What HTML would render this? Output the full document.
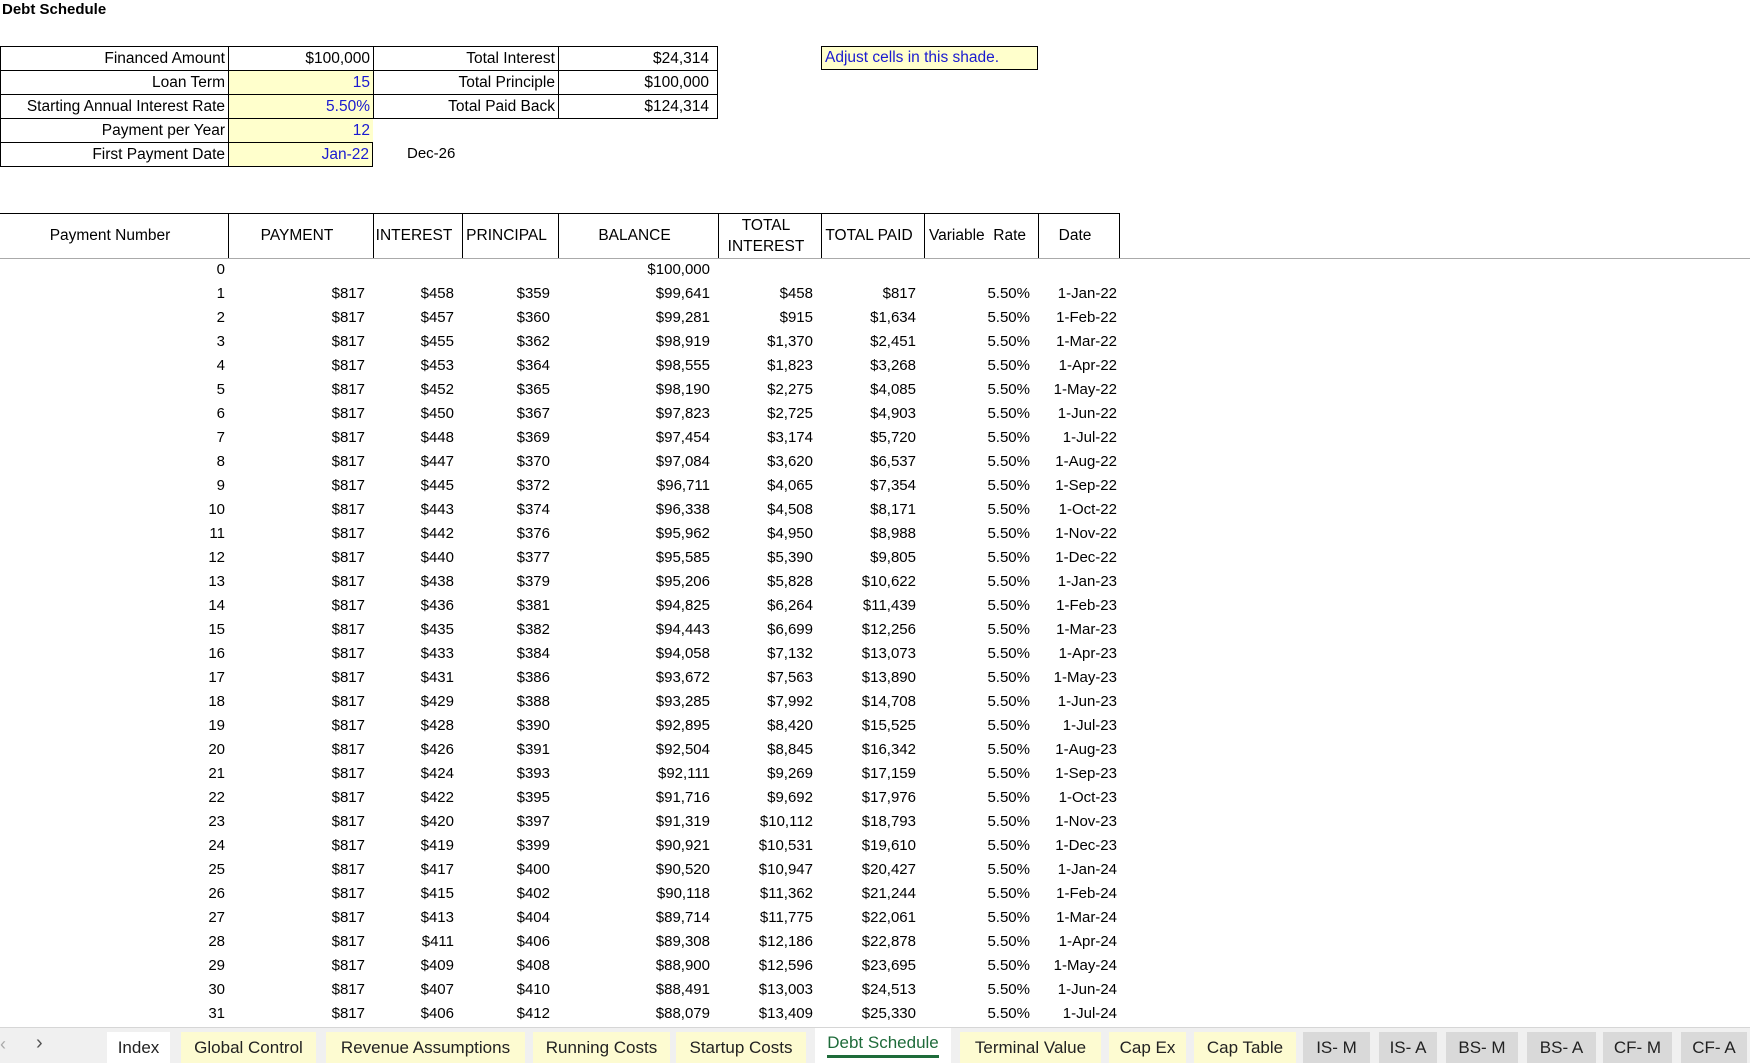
<!DOCTYPE html>
<html><head><meta charset="utf-8"><style>
body{margin:0;width:1750px;height:1062px;overflow:hidden;background:#fff;font-family:"Liberation Sans",Arial,sans-serif;color:#000;position:relative}
.a{position:absolute}
.title{left:2px;top:1px;font-weight:bold;font-size:15px}
.c{position:absolute;height:24px;line-height:24px;font-size:15.5px;text-align:right;padding-right:3px;box-sizing:border-box;border:1px solid #000;border-right:none;border-bottom:none}
.y{background:#ffffcc;color:#1a1ad0}
.r{position:absolute;left:0;height:24px;line-height:24px;font-size:15px;display:flex}
.r span{display:block;text-align:right;box-sizing:border-box;padding-right:8px;white-space:nowrap}
.hd span{display:flex;align-items:center;justify-content:center;text-align:center;border-left:1px solid #000;box-sizing:border-box;font-size:15.5px;line-height:21px}
.tabs{position:absolute;left:0;top:1027px;width:1750px;height:35px;background:#f0f0f0;border-top:1px solid #d6d6d6}
.t{position:absolute;top:4px;height:31px;line-height:31px;font-size:17px;text-align:center;background:#fdfbd1;color:#222}
.g{background:#d9d9d9}
</style></head><body>
<div class="a title">Debt Schedule</div>

<!-- top table -->
<div class="c" style="left:0;top:46px;width:228px">Financed Amount</div>
<div class="c" style="left:228px;top:46px;width:145px">$100,000</div>
<div class="c" style="left:0;top:70px;width:228px">Loan Term</div>
<div class="c y" style="left:228px;top:70px;width:145px">15</div>
<div class="c" style="left:0;top:94px;width:228px">Starting Annual Interest Rate</div>
<div class="c y" style="left:228px;top:94px;width:145px">5.50%</div>
<div class="c" style="left:0;top:118px;width:228px">Payment per Year</div>
<div class="c y" style="left:228px;top:118px;width:145px">12</div>
<div class="c" style="left:0;top:142px;width:228px;border-bottom:1px solid #000;height:25px">First Payment Date</div>
<div class="c y" style="left:228px;top:142px;width:145px;border-bottom:1px solid #000;height:25px;border-right:1px solid #000">Jan-22</div>
<div class="a" style="left:407px;top:142px;line-height:24px;font-size:15px">Dec-26</div>

<div class="c" style="left:373px;top:46px;width:185px">Total Interest</div>
<div class="c" style="left:558px;top:46px;width:160px;border-right:1px solid #000;padding-right:8px">$24,314</div>
<div class="c" style="left:373px;top:70px;width:185px">Total Principle</div>
<div class="c" style="left:558px;top:70px;width:160px;border-right:1px solid #000;padding-right:8px">$100,000</div>
<div class="c" style="left:373px;top:94px;width:185px;border-bottom:1px solid #000;height:25px">Total Paid Back</div>
<div class="c" style="left:558px;top:94px;width:160px;border:1px solid #000;height:25px;padding-right:8px">$124,314</div>

<div class="a" style="left:821px;top:46px;width:217px;height:24px;box-sizing:border-box;border:1px solid #000;background:#ffffcc;color:#1a1ad0;font-size:15.5px;line-height:22px;padding-left:3px">Adjust cells in this shade.</div>

<!-- header -->
<div class="a" style="left:0;top:213px;width:1120px;border-top:1px solid #000"></div>
<div class="a" style="left:0;top:258px;width:1750px;border-top:1px solid #aaa"></div>
<div class="r hd" style="top:213px;height:45px">
<span style="width:228px;border-left:none">Payment Number</span>
<span style="width:145px">PAYMENT</span>
<span style="width:89px">INTEREST</span>
<span style="width:96px">PRINCIPAL</span>
<span style="width:160px">BALANCE</span>
<span style="width:103px">TOTAL<br>INTEREST</span>
<span style="width:103px">TOTAL PAID</span>
<span style="width:114px">Variable&nbsp; Rate</span>
<span style="width:82px;border-right:1px solid #000">Date</span>
</div>

<div class="r" style="top:258px"><span style="width:228px;padding-right:3px">0</span><span style="width:145px"></span><span style="width:89px"></span><span style="width:96px"></span><span style="width:160px">$100,000</span></div>
<div class="r" style="top:282px"><span style="width:228px;padding-right:3px">1</span><span style="width:145px">$817</span><span style="width:89px">$458</span><span style="width:96px">$359</span><span style="width:160px">$99,641</span><span style="width:103px">$458</span><span style="width:103px">$817</span><span style="width:114px">5.50%</span><span style="width:82px;padding-right:3px">1-Jan-22</span></div>
<div class="r" style="top:306px"><span style="width:228px;padding-right:3px">2</span><span style="width:145px">$817</span><span style="width:89px">$457</span><span style="width:96px">$360</span><span style="width:160px">$99,281</span><span style="width:103px">$915</span><span style="width:103px">$1,634</span><span style="width:114px">5.50%</span><span style="width:82px;padding-right:3px">1-Feb-22</span></div>
<div class="r" style="top:330px"><span style="width:228px;padding-right:3px">3</span><span style="width:145px">$817</span><span style="width:89px">$455</span><span style="width:96px">$362</span><span style="width:160px">$98,919</span><span style="width:103px">$1,370</span><span style="width:103px">$2,451</span><span style="width:114px">5.50%</span><span style="width:82px;padding-right:3px">1-Mar-22</span></div>
<div class="r" style="top:354px"><span style="width:228px;padding-right:3px">4</span><span style="width:145px">$817</span><span style="width:89px">$453</span><span style="width:96px">$364</span><span style="width:160px">$98,555</span><span style="width:103px">$1,823</span><span style="width:103px">$3,268</span><span style="width:114px">5.50%</span><span style="width:82px;padding-right:3px">1-Apr-22</span></div>
<div class="r" style="top:378px"><span style="width:228px;padding-right:3px">5</span><span style="width:145px">$817</span><span style="width:89px">$452</span><span style="width:96px">$365</span><span style="width:160px">$98,190</span><span style="width:103px">$2,275</span><span style="width:103px">$4,085</span><span style="width:114px">5.50%</span><span style="width:82px;padding-right:3px">1-May-22</span></div>
<div class="r" style="top:402px"><span style="width:228px;padding-right:3px">6</span><span style="width:145px">$817</span><span style="width:89px">$450</span><span style="width:96px">$367</span><span style="width:160px">$97,823</span><span style="width:103px">$2,725</span><span style="width:103px">$4,903</span><span style="width:114px">5.50%</span><span style="width:82px;padding-right:3px">1-Jun-22</span></div>
<div class="r" style="top:426px"><span style="width:228px;padding-right:3px">7</span><span style="width:145px">$817</span><span style="width:89px">$448</span><span style="width:96px">$369</span><span style="width:160px">$97,454</span><span style="width:103px">$3,174</span><span style="width:103px">$5,720</span><span style="width:114px">5.50%</span><span style="width:82px;padding-right:3px">1-Jul-22</span></div>
<div class="r" style="top:450px"><span style="width:228px;padding-right:3px">8</span><span style="width:145px">$817</span><span style="width:89px">$447</span><span style="width:96px">$370</span><span style="width:160px">$97,084</span><span style="width:103px">$3,620</span><span style="width:103px">$6,537</span><span style="width:114px">5.50%</span><span style="width:82px;padding-right:3px">1-Aug-22</span></div>
<div class="r" style="top:474px"><span style="width:228px;padding-right:3px">9</span><span style="width:145px">$817</span><span style="width:89px">$445</span><span style="width:96px">$372</span><span style="width:160px">$96,711</span><span style="width:103px">$4,065</span><span style="width:103px">$7,354</span><span style="width:114px">5.50%</span><span style="width:82px;padding-right:3px">1-Sep-22</span></div>
<div class="r" style="top:498px"><span style="width:228px;padding-right:3px">10</span><span style="width:145px">$817</span><span style="width:89px">$443</span><span style="width:96px">$374</span><span style="width:160px">$96,338</span><span style="width:103px">$4,508</span><span style="width:103px">$8,171</span><span style="width:114px">5.50%</span><span style="width:82px;padding-right:3px">1-Oct-22</span></div>
<div class="r" style="top:522px"><span style="width:228px;padding-right:3px">11</span><span style="width:145px">$817</span><span style="width:89px">$442</span><span style="width:96px">$376</span><span style="width:160px">$95,962</span><span style="width:103px">$4,950</span><span style="width:103px">$8,988</span><span style="width:114px">5.50%</span><span style="width:82px;padding-right:3px">1-Nov-22</span></div>
<div class="r" style="top:546px"><span style="width:228px;padding-right:3px">12</span><span style="width:145px">$817</span><span style="width:89px">$440</span><span style="width:96px">$377</span><span style="width:160px">$95,585</span><span style="width:103px">$5,390</span><span style="width:103px">$9,805</span><span style="width:114px">5.50%</span><span style="width:82px;padding-right:3px">1-Dec-22</span></div>
<div class="r" style="top:570px"><span style="width:228px;padding-right:3px">13</span><span style="width:145px">$817</span><span style="width:89px">$438</span><span style="width:96px">$379</span><span style="width:160px">$95,206</span><span style="width:103px">$5,828</span><span style="width:103px">$10,622</span><span style="width:114px">5.50%</span><span style="width:82px;padding-right:3px">1-Jan-23</span></div>
<div class="r" style="top:594px"><span style="width:228px;padding-right:3px">14</span><span style="width:145px">$817</span><span style="width:89px">$436</span><span style="width:96px">$381</span><span style="width:160px">$94,825</span><span style="width:103px">$6,264</span><span style="width:103px">$11,439</span><span style="width:114px">5.50%</span><span style="width:82px;padding-right:3px">1-Feb-23</span></div>
<div class="r" style="top:618px"><span style="width:228px;padding-right:3px">15</span><span style="width:145px">$817</span><span style="width:89px">$435</span><span style="width:96px">$382</span><span style="width:160px">$94,443</span><span style="width:103px">$6,699</span><span style="width:103px">$12,256</span><span style="width:114px">5.50%</span><span style="width:82px;padding-right:3px">1-Mar-23</span></div>
<div class="r" style="top:642px"><span style="width:228px;padding-right:3px">16</span><span style="width:145px">$817</span><span style="width:89px">$433</span><span style="width:96px">$384</span><span style="width:160px">$94,058</span><span style="width:103px">$7,132</span><span style="width:103px">$13,073</span><span style="width:114px">5.50%</span><span style="width:82px;padding-right:3px">1-Apr-23</span></div>
<div class="r" style="top:666px"><span style="width:228px;padding-right:3px">17</span><span style="width:145px">$817</span><span style="width:89px">$431</span><span style="width:96px">$386</span><span style="width:160px">$93,672</span><span style="width:103px">$7,563</span><span style="width:103px">$13,890</span><span style="width:114px">5.50%</span><span style="width:82px;padding-right:3px">1-May-23</span></div>
<div class="r" style="top:690px"><span style="width:228px;padding-right:3px">18</span><span style="width:145px">$817</span><span style="width:89px">$429</span><span style="width:96px">$388</span><span style="width:160px">$93,285</span><span style="width:103px">$7,992</span><span style="width:103px">$14,708</span><span style="width:114px">5.50%</span><span style="width:82px;padding-right:3px">1-Jun-23</span></div>
<div class="r" style="top:714px"><span style="width:228px;padding-right:3px">19</span><span style="width:145px">$817</span><span style="width:89px">$428</span><span style="width:96px">$390</span><span style="width:160px">$92,895</span><span style="width:103px">$8,420</span><span style="width:103px">$15,525</span><span style="width:114px">5.50%</span><span style="width:82px;padding-right:3px">1-Jul-23</span></div>
<div class="r" style="top:738px"><span style="width:228px;padding-right:3px">20</span><span style="width:145px">$817</span><span style="width:89px">$426</span><span style="width:96px">$391</span><span style="width:160px">$92,504</span><span style="width:103px">$8,845</span><span style="width:103px">$16,342</span><span style="width:114px">5.50%</span><span style="width:82px;padding-right:3px">1-Aug-23</span></div>
<div class="r" style="top:762px"><span style="width:228px;padding-right:3px">21</span><span style="width:145px">$817</span><span style="width:89px">$424</span><span style="width:96px">$393</span><span style="width:160px">$92,111</span><span style="width:103px">$9,269</span><span style="width:103px">$17,159</span><span style="width:114px">5.50%</span><span style="width:82px;padding-right:3px">1-Sep-23</span></div>
<div class="r" style="top:786px"><span style="width:228px;padding-right:3px">22</span><span style="width:145px">$817</span><span style="width:89px">$422</span><span style="width:96px">$395</span><span style="width:160px">$91,716</span><span style="width:103px">$9,692</span><span style="width:103px">$17,976</span><span style="width:114px">5.50%</span><span style="width:82px;padding-right:3px">1-Oct-23</span></div>
<div class="r" style="top:810px"><span style="width:228px;padding-right:3px">23</span><span style="width:145px">$817</span><span style="width:89px">$420</span><span style="width:96px">$397</span><span style="width:160px">$91,319</span><span style="width:103px">$10,112</span><span style="width:103px">$18,793</span><span style="width:114px">5.50%</span><span style="width:82px;padding-right:3px">1-Nov-23</span></div>
<div class="r" style="top:834px"><span style="width:228px;padding-right:3px">24</span><span style="width:145px">$817</span><span style="width:89px">$419</span><span style="width:96px">$399</span><span style="width:160px">$90,921</span><span style="width:103px">$10,531</span><span style="width:103px">$19,610</span><span style="width:114px">5.50%</span><span style="width:82px;padding-right:3px">1-Dec-23</span></div>
<div class="r" style="top:858px"><span style="width:228px;padding-right:3px">25</span><span style="width:145px">$817</span><span style="width:89px">$417</span><span style="width:96px">$400</span><span style="width:160px">$90,520</span><span style="width:103px">$10,947</span><span style="width:103px">$20,427</span><span style="width:114px">5.50%</span><span style="width:82px;padding-right:3px">1-Jan-24</span></div>
<div class="r" style="top:882px"><span style="width:228px;padding-right:3px">26</span><span style="width:145px">$817</span><span style="width:89px">$415</span><span style="width:96px">$402</span><span style="width:160px">$90,118</span><span style="width:103px">$11,362</span><span style="width:103px">$21,244</span><span style="width:114px">5.50%</span><span style="width:82px;padding-right:3px">1-Feb-24</span></div>
<div class="r" style="top:906px"><span style="width:228px;padding-right:3px">27</span><span style="width:145px">$817</span><span style="width:89px">$413</span><span style="width:96px">$404</span><span style="width:160px">$89,714</span><span style="width:103px">$11,775</span><span style="width:103px">$22,061</span><span style="width:114px">5.50%</span><span style="width:82px;padding-right:3px">1-Mar-24</span></div>
<div class="r" style="top:930px"><span style="width:228px;padding-right:3px">28</span><span style="width:145px">$817</span><span style="width:89px">$411</span><span style="width:96px">$406</span><span style="width:160px">$89,308</span><span style="width:103px">$12,186</span><span style="width:103px">$22,878</span><span style="width:114px">5.50%</span><span style="width:82px;padding-right:3px">1-Apr-24</span></div>
<div class="r" style="top:954px"><span style="width:228px;padding-right:3px">29</span><span style="width:145px">$817</span><span style="width:89px">$409</span><span style="width:96px">$408</span><span style="width:160px">$88,900</span><span style="width:103px">$12,596</span><span style="width:103px">$23,695</span><span style="width:114px">5.50%</span><span style="width:82px;padding-right:3px">1-May-24</span></div>
<div class="r" style="top:978px"><span style="width:228px;padding-right:3px">30</span><span style="width:145px">$817</span><span style="width:89px">$407</span><span style="width:96px">$410</span><span style="width:160px">$88,491</span><span style="width:103px">$13,003</span><span style="width:103px">$24,513</span><span style="width:114px">5.50%</span><span style="width:82px;padding-right:3px">1-Jun-24</span></div>
<div class="r" style="top:1002px"><span style="width:228px;padding-right:3px">31</span><span style="width:145px">$817</span><span style="width:89px">$406</span><span style="width:96px">$412</span><span style="width:160px">$88,079</span><span style="width:103px">$13,409</span><span style="width:103px">$25,330</span><span style="width:114px">5.50%</span><span style="width:82px;padding-right:3px">1-Jul-24</span></div>

<!-- tabs -->
<div class="tabs">
<div class="a" style="left:0;top:6px;font-size:18px;color:#aaa">&lsaquo;</div>
<div class="a" style="left:36px;top:4px;font-size:20px;color:#555">&rsaquo;</div>
<div class="t" style="left:107px;width:63px;background:#fff">Index</div>
<div class="t" style="left:181px;width:135px">Global Control</div>
<div class="t" style="left:326px;width:199px">Revenue Assumptions</div>
<div class="t" style="left:533px;width:137px">Running Costs</div>
<div class="t" style="left:676px;width:130px">Startup Costs</div>
<div class="t" style="left:815px;width:136px;background:#fff;top:0;height:35px;line-height:30px;color:#1e6b3a">Debt Schedule<div style="position:absolute;left:12px;right:12px;bottom:5px;height:3px;background:#1e6b3a"></div></div>
<div class="t" style="left:960px;width:141px">Terminal Value</div>
<div class="t" style="left:1109px;width:77px">Cap Ex</div>
<div class="t" style="left:1194px;width:102px">Cap Table</div>
<div class="t g" style="left:1303px;width:67px">IS- M</div>
<div class="t g" style="left:1379px;width:58px">IS- A</div>
<div class="t g" style="left:1446px;width:72px">BS- M</div>
<div class="t g" style="left:1527px;width:69px">BS- A</div>
<div class="t g" style="left:1603px;width:69px">CF- M</div>
<div class="t g" style="left:1681px;width:66px">CF- A</div>
</div>
</body></html>
